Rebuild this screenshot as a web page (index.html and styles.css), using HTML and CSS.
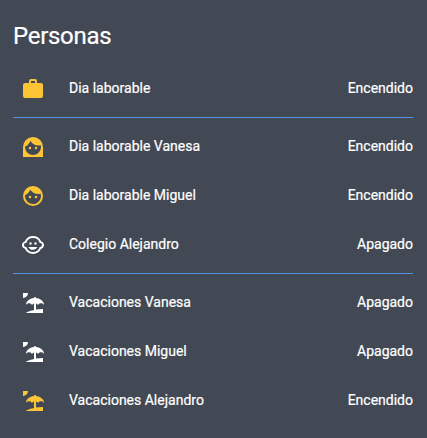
FILE: index.html
```html
<!DOCTYPE html>
<html lang="es">
<head>
<meta charset="utf-8">
<title>Personas</title>
<link rel="stylesheet" href="styles.css">
</head>
<body>
<svg class="defs">
<symbol id="briefcase" viewBox="0 0 24 24"><path d="M10 2h4a2 2 0 0 1 2 2v2h4a2 2 0 0 1 2 2v11a2 2 0 0 1-2 2H4a2 2 0 0 1-2-2V8a2 2 0 0 1 2-2h4V4a2 2 0 0 1 2-2m4 4V4h-4v2h4Z"/></symbol>
<symbol id="woman" viewBox="0 0 24 24"><path d="M13.75 13A1.25 1.25 0 1 0 15 11.75 1.25 1.25 0 0 0 13.75 13M22 12v10H2V12a10 10 0 0 1 20 0M4 12a8 8 0 1 0 16 0 7.8 7.8 0 0 0-.21-1.77A10 10 0 0 1 17.5 10.5 10 10 0 0 1 9.26 5.77 10.1 10.1 0 0 1 4 11.86V12m5-.25A1.25 1.25 0 1 0 10.25 13 1.25 1.25 0 0 0 9 11.75Z"/></symbol>
<symbol id="man" viewBox="0 0 24 24"><path d="M9 11.75A1.25 1.25 0 1 0 10.25 13 1.25 1.25 0 0 0 9 11.75m6 0A1.25 1.25 0 1 0 16.25 13 1.25 1.25 0 0 0 15 11.75M12 2a10 10 0 1 0 10 10A10 10 0 0 0 12 2m0 18a8 8 0 0 1-8-8c0-.29 0-.58.05-.86 2.36-1.05 4.23-2.98 5.21-5.37A9.97 9.97 0 0 0 17.42 10c.76 0 1.51-.09 2.25-.26A8 8 0 0 1 12 20Z"/></symbol>
<symbol id="baby" viewBox="0 0 24 24"><path fill-rule="evenodd" d="M22.94 12.66a4 4 0 0 0 0-1.32 4 4 0 0 0-2.81-3.17 9 9 0 0 0-16.26 0 4 4 0 0 0-2.81 3.17 4 4 0 0 0 2.81 4.49 9 9 0 0 0 16.26 0 4 4 0 0 0 2.81-3.17M19 14c-.1 0-.19 0-.29-.03A7 7 0 0 1 12 19a7 7 0 0 1-6.71-5.03A2 2 0 1 1 5.29 10.03 7 7 0 0 1 18.71 10.03 2 2 0 1 1 19 14M7.5 14a4.98 4.98 0 0 0 9 0h-9M8.25 10.5a1.25 1.25 0 1 0 2.5 0 1.25 1.25 0 0 0-2.5 0m5 0a1.25 1.25 0 1 0 2.5 0 1.25 1.25 0 0 0-2.5 0Z"/></symbol>
<symbol id="beach" viewBox="0 0 24 24"><path d="M15 18.54C17.13 18.21 19.5 18 22 18V22H5C5 21.35 8.2 19.86 13 18.9V12.4C12.16 12.65 11.45 13.21 11 13.95C10.39 12.93 9.27 12.25 8 12.25C6.73 12.25 5.61 12.93 5 13.95C5.03 10.37 8.5 7.43 13 7.04V7A1 1 0 0 1 15 7V7.04C19.5 7.43 22.96 10.37 23 13.95C22.39 12.93 21.27 12.25 20 12.25C18.73 12.25 17.61 12.93 17 13.95C16.55 13.21 15.84 12.65 15 12.39V18.54M7 2A5 5 0 0 1 2 7V2H7Z"/></symbol>
</svg>
<main class="card">
<h1 class="title">Personas</h1>
<div class="row on"><svg class="icon"><use href="#briefcase"/></svg><span class="name">Dia laborable</span><span class="state">Encendido</span></div>
<hr class="divider">
<div class="row on"><svg class="icon"><use href="#woman"/></svg><span class="name">Dia laborable Vanesa</span><span class="state">Encendido</span></div>
<div class="row on"><svg class="icon"><use href="#man"/></svg><span class="name">Dia laborable Miguel</span><span class="state">Encendido</span></div>
<div class="row"><svg class="icon"><use href="#baby"/></svg><span class="name">Colegio Alejandro</span><span class="state">Apagado</span></div>
<hr class="divider">
<div class="row"><svg class="icon"><use href="#beach"/></svg><span class="name">Vacaciones Vanesa</span><span class="state">Apagado</span></div>
<div class="row"><svg class="icon"><use href="#beach"/></svg><span class="name">Vacaciones Miguel</span><span class="state">Apagado</span></div>
<div class="row on"><svg class="icon"><use href="#beach"/></svg><span class="name">Vacaciones Alejandro</span><span class="state">Encendido</span></div>
</main>
</body>
</html>
```
FILE: styles.css
```css
body {
  margin: 0;
  background: #434954;
  color: #fff;
  font: 14px/20px Roboto, sans-serif;
  -webkit-text-stroke: 0.2px #fff;
}
.defs { display: none; }
.card {
  box-sizing: border-box;
  height: 438px;
  padding: 12px 14px 0 13px;
}
.title {
  margin: 0 0 4px;
  font-size: 24px;
  line-height: 48px;
  font-weight: 400;
  letter-spacing: -0.288px;
}
.row {
  display: flex;
  align-items: center;
  height: 49px;
}
.icon {
  width: 24px;
  height: 24px;
  margin: 0 24px 0 8px;
  fill: #fff;
  stroke: none;
}
.on .icon { fill: #fdc536; }
.name { flex: 1; }
.name,
.state { padding-bottom: 2px; }
.divider {
  height: 1px;
  margin: 4px 0;
  border: 0;
  background: #5294e2;
}
```
